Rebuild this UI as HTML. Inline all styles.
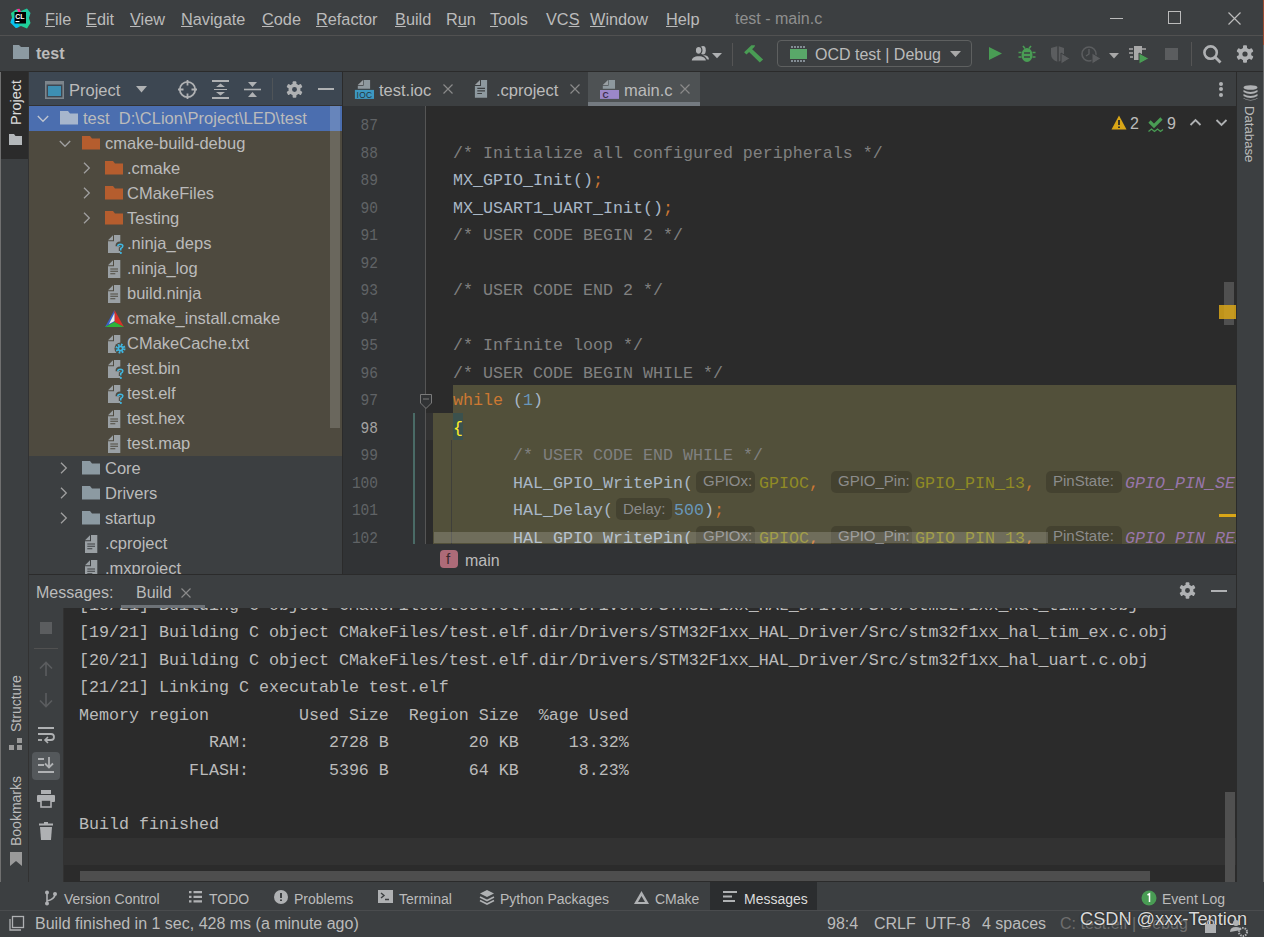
<!DOCTYPE html>
<html><head><meta charset="utf-8">
<style>
*{margin:0;padding:0;box-sizing:border-box}
html,body{width:1264px;height:937px;overflow:hidden;background:#3c3f41;font-family:"Liberation Sans",sans-serif;color:#bbbbbb}
.a{position:absolute}
.t{position:absolute;white-space:pre;font-size:16px}
.m{font-family:"Liberation Mono",monospace;white-space:pre;position:absolute;font-size:16.67px}
svg{position:absolute;overflow:visible}
#editor .m{margin-top:2px}
</style></head><body>
<!-- window left border -->
<div class="a" style="left:0;top:0;width:1px;height:937px;background:#707070"></div>

<!-- MENU BAR -->
<div id="menu" class="a" style="left:0;top:0;width:1264px;height:35px;background:#3c3f41">
<svg style="left:10px;top:8px" width="21" height="21" viewBox="0 0 21 21">
<defs><linearGradient id="lg2" x1="0" y1="0" x2="1" y2="1"><stop offset="0" stop-color="#1ed48a"/><stop offset="0.6" stop-color="#1ec9a8"/><stop offset="1" stop-color="#21d789"/></linearGradient></defs>
<path d="M1 5 L7 1 L11 3 L17 0.5 L20.5 5 L19 10 L20.5 15 L17 20.5 L11 18 L6 20 L0.5 14.5 L2 10 Z" fill="url(#lg2)"/>
<path d="M0.5 14.5 L2 10 L7 11 L9 19 L6 20 Z" fill="#07c3f2"/>
<path d="M7 1 L9.5 0.8 L11 4 L8 4 Z" fill="#fc2f98"/>
<rect x="4.5" y="4" width="11.5" height="11.5" fill="#000"/>
<text x="5.3" y="10.8" font-family="Liberation Sans" font-weight="bold" font-size="7" fill="#fff">CL</text>
<rect x="5.5" y="13" width="4" height="1.1" fill="#fff"/>
</svg>
<div class="t" style="left:45px;top:10px;line-height:18px;font-size:16.3px"><u>F</u>ile</div>
<div class="t" style="left:86px;top:10px;line-height:18px;font-size:16.3px"><u>E</u>dit</div>
<div class="t" style="left:130px;top:10px;line-height:18px;font-size:16.3px"><u>V</u>iew</div>
<div class="t" style="left:181px;top:10px;line-height:18px;font-size:16.3px"><u>N</u>avigate</div>
<div class="t" style="left:262px;top:10px;line-height:18px;font-size:16.3px"><u>C</u>ode</div>
<div class="t" style="left:316px;top:10px;line-height:18px;font-size:16.3px"><u>R</u>efactor</div>
<div class="t" style="left:395px;top:10px;line-height:18px;font-size:16.3px"><u>B</u>uild</div>
<div class="t" style="left:446px;top:10px;line-height:18px;font-size:16.3px">R<u>u</u>n</div>
<div class="t" style="left:490px;top:10px;line-height:18px;font-size:16.3px"><u>T</u>ools</div>
<div class="t" style="left:546px;top:10px;line-height:18px;font-size:16.3px">VC<u>S</u></div>
<div class="t" style="left:590px;top:10px;line-height:18px;font-size:16.3px"><u>W</u>indow</div>
<div class="t" style="left:666px;top:10px;line-height:18px;font-size:16.3px"><u>H</u>elp</div>
<div class="t" style="left:735px;top:10px;line-height:18px;color:#8f8f8f">test - main.c</div>
<div class="a" style="left:1110px;top:18px;width:13px;height:1px;background:#bbb"></div>
<div class="a" style="left:1168px;top:11px;width:13px;height:13px;border:1px solid #bbb"></div>
<svg style="left:1228px;top:12px" width="13" height="13"><path d="M0.5 0.5 L12.5 12.5 M12.5 0.5 L0.5 12.5" stroke="#bbb" stroke-width="1.2"/></svg>
</div>
<div class="a" style="left:0;top:35px;width:1264px;height:1px;background:#515151"></div>

<!-- NAV BAR -->
<div id="nav" class="a" style="left:0;top:36px;width:1264px;height:35px;background:#3c3f41">
<svg style="left:13px;top:9px" width="16" height="14"><path d="M0 0 H6 L8 2 H16 V14 H0 Z" fill="#8c9aa2"/></svg>
<div class="t" style="left:36px;top:9px;line-height:18px;font-weight:bold">test</div>
<svg style="left:686px;top:4px" width="28" height="28" viewBox="0 0 28 28"><ellipse cx="17" cy="10.2" rx="2.8" ry="4.2" fill="#afb1b3"/><path d="M15 19 Q16 15 19 15.2 Q22.5 15.6 23 19.5 Z" fill="#afb1b3"/><ellipse cx="12.6" cy="10.3" rx="3.3" ry="4" fill="#afb1b3" stroke="#3c3f41" stroke-width="1.2"/><path d="M5 21 Q5.2 15.8 12.6 15.4 Q20.4 15.8 20.6 21 Z" fill="#afb1b3" stroke="#3c3f41" stroke-width="1.2"/><rect x="4" y="21" width="18" height="3" fill="#3c3f41"/></svg>
<svg style="left:712px;top:17px" width="10" height="6"><path d="M0 0 H10 L5 5.2 Z" fill="#afb1b3"/></svg>
<div class="a" style="left:732px;top:7px;width:1px;height:23px;background:#555"></div>
<svg style="left:740px;top:4px" width="28" height="28" viewBox="0 0 28 28"><path d="M4.1 12.3 L11.4 5.3 L15.1 5.3 L14.4 7 L6.5 14.6 Z" fill="#499c54"/><path d="M8.3 11.2 L11.4 8.6 L23.1 19.6 L19.8 22.6 Z" fill="#499c54"/></svg>
<div class="a" style="left:777px;top:4px;width:195px;height:27px;border:1px solid #5e6060;border-radius:4px"></div>
<svg style="left:790px;top:10px" width="17" height="16" viewBox="0 0 17 16"><rect x="0" y="3" width="17" height="10" fill="#59a869"/><path d="M2 0 v2 M5 0 v2 M8 0 v2 M11 0 v2 M14 0 v2 M2 14 v2 M5 14 v2 M8 14 v2 M11 14 v2 M14 14 v2" stroke="#9aa7b0" stroke-width="1.5"/></svg>
<div class="t" style="left:815px;top:10px;line-height:18px">OCD test | Debug</div>
<svg style="left:950px;top:15px" width="11" height="7"><path d="M0 0 H11 L5.5 6 Z" fill="#a8a8a8"/></svg>
<svg style="left:989px;top:11px" width="14" height="14"><path d="M0 0 L13 6.5 L0 13 Z" fill="#499c54"/></svg>
<svg style="left:1018px;top:9px" width="18" height="18" viewBox="0 0 18 18"><path d="M5 1 L7 3.5 M13 1 L11 3.5" stroke="#499c54" stroke-width="1.6"/><ellipse cx="9" cy="10" rx="5.5" ry="7" fill="#499c54"/><path d="M0 8 H3 M15 8 H18 M0 12 H3 M15 12 H18 M5 8 H13 M5 12 H13" stroke="#3c3f41" stroke-width="0"/><path d="M0.5 7.5 H3.5 M14.5 7.5 H17.5 M0.5 12 H3.5 M14.5 12 H17.5" stroke="#499c54" stroke-width="1.6"/><path d="M6 8 H12 M6 12 H12" stroke="#3c3f41" stroke-width="1.4"/></svg>
<svg style="left:1050px;top:9px" width="22" height="20" viewBox="0 0 22 20"><path d="M1 3 L8 1 L14 3 V9 Q14 15 8 17 Q1 15 1 9 Z" fill="#5b5d5f"/><path d="M8 1 V17" stroke="#3c3f41" stroke-width="1.5"/><path d="M11 8 L20 13.5 L11 19 Z" fill="#5b5d5f" stroke="#3c3f41" stroke-width="1"/></svg>
<svg style="left:1081px;top:9px" width="22" height="20" viewBox="0 0 22 20"><circle cx="8" cy="9" r="7" fill="none" stroke="#5b5d5f" stroke-width="1.6"/><path d="M8 4 V9 L5 11" stroke="#5b5d5f" stroke-width="1.4" fill="none"/><path d="M11 8 L20 13.5 L11 19 Z" fill="#5b5d5f" stroke="#3c3f41" stroke-width="1"/></svg>
<svg style="left:1109px;top:17px" width="10" height="6"><path d="M0 0 H10 L5 5.5 Z" fill="#a8a8a8"/></svg>
<svg style="left:1129px;top:9px" width="22" height="20" viewBox="0 0 22 20"><rect x="5" y="1" width="8" height="14" fill="#a8a8a8"/><path d="M0 4 H4 M0 8 H4 M1 12 H4 M13 4 H17" stroke="#a8a8a8" stroke-width="1.6"/><path d="M10 8 L20 13.5 L10 19 Z" fill="#499c54" stroke="#3c3f41" stroke-width="1"/></svg>
<div class="a" style="left:1165px;top:12px;width:13px;height:12px;background:#5b5d5f"></div>
<div class="a" style="left:1191px;top:6px;width:1px;height:24px;background:#555"></div>
<svg style="left:1203px;top:9px" width="19" height="19" viewBox="0 0 19 19"><circle cx="7.6" cy="7.6" r="6.2" fill="none" stroke="#afb1b3" stroke-width="2.6"/><path d="M12 12 L17.5 17.5" stroke="#afb1b3" stroke-width="2.8"/></svg>
<svg style="left:1236px;top:9px" width="18" height="18" viewBox="0 0 18 18"><g fill="#afb1b3"><circle cx="9" cy="9" r="6.3"/><rect x="7" y="0.3" width="4" height="4.5" rx="1" transform="rotate(0 9 9)"/><rect x="7" y="0.3" width="4" height="4.5" rx="1" transform="rotate(60 9 9)"/><rect x="7" y="0.3" width="4" height="4.5" rx="1" transform="rotate(120 9 9)"/><rect x="7" y="0.3" width="4" height="4.5" rx="1" transform="rotate(180 9 9)"/><rect x="7" y="0.3" width="4" height="4.5" rx="1" transform="rotate(240 9 9)"/><rect x="7" y="0.3" width="4" height="4.5" rx="1" transform="rotate(300 9 9)"/></g><circle cx="9" cy="9" r="2.6" fill="#3c3f41"/></svg>
</div>
<div class="a" style="left:0;top:71px;width:1264px;height:1px;background:#2b2b2b"></div>

<!-- LEFT STRIP -->
<div id="lstrip" class="a" style="left:1px;top:72px;width:27px;height:810px;background:#3c3f41">
<div class="a" style="left:0;top:0;width:27px;height:87px;background:#2b2b2b"></div>
<div class="t" style="left:6px;top:53px;width:60px;height:18px;line-height:18px;font-size:14.5px;color:#dcdcdc;transform:rotate(-90deg);transform-origin:0 0">Project</div>
<svg style="left:8px;top:62px" width="13" height="11"><path d="M0 0 H5 L6.5 2 H13 V11 H0 Z" fill="#b4b8bb"/></svg>
<div class="t" style="left:7px;top:660px;width:70px;height:16px;line-height:16px;font-size:14px;color:#bbbbbb;transform:rotate(-90deg);transform-origin:0 0">Structure</div>
<svg style="left:8px;top:666px" width="13" height="12"><rect x="8" y="0" width="5" height="5" fill="#9a9a9a"/><rect x="0" y="7" width="5" height="5" fill="#9a9a9a"/><rect x="8" y="7" width="5" height="5" fill="#9a9a9a"/></svg>
<div class="t" style="left:7px;top:774px;width:80px;height:16px;line-height:16px;font-size:14px;color:#bbbbbb;transform:rotate(-90deg);transform-origin:0 0">Bookmarks</div>
<svg style="left:9px;top:780px" width="12" height="14"><path d="M0 0 H12 V14 L6 9 L0 14 Z" fill="#9a9a9a"/></svg>
</div>
<div class="a" style="left:28px;top:72px;width:1px;height:810px;background:#323232"></div>

<!-- PROJECT PANEL -->
<div id="proj" class="a" style="left:29px;top:72px;width:313px;height:502px;background:#3c3f41;overflow:hidden">
<div class="a" style="left:0;top:0;width:313px;height:33px;background:#3d4752"></div>
<div class="a" style="left:0;top:33px;width:313px;height:1px;background:#323232"></div>
<svg style="left:16px;top:9px" width="19" height="18" viewBox="0 0 19 18"><rect x="0.8" y="0.8" width="17.4" height="16.4" fill="none" stroke="#7d858c" stroke-width="1.6"/><rect x="0" y="0" width="19" height="3.5" fill="#7d858c"/><rect x="3" y="5" width="13" height="10" fill="#3d8fb3"/></svg>
<div class="t" style="left:40px;top:9px;line-height:18px;font-size:16.5px">Project</div>
<svg style="left:107px;top:14px" width="11" height="7"><path d="M0 0 H11 L5.5 6.5 Z" fill="#afb1b3"/></svg>
<svg style="left:149px;top:8px" width="19" height="19" viewBox="0 0 19 19"><circle cx="9.5" cy="9.5" r="7.7" fill="none" stroke="#afb1b3" stroke-width="1.8"/><path d="M9.5 0 V5.5 M9.5 13.5 V19 M0 9.5 H5.5 M13.5 9.5 H19" stroke="#afb1b3" stroke-width="1.8"/></svg>
<svg style="left:183px;top:8px" width="17" height="19" viewBox="0 0 17 19"><path d="M0 1 H17 M0 18 H17" stroke="#afb1b3" stroke-width="2"/><path d="M4 7 L8.5 3.5 L13 7 Z M4 12 L8.5 15.5 L13 12 Z" fill="#afb1b3"/><path d="M2 9.5 H15" stroke="#afb1b3" stroke-width="1"/></svg>
<svg style="left:215px;top:8px" width="17" height="19" viewBox="0 0 17 19"><path d="M0 9.5 H17" stroke="#afb1b3" stroke-width="1.6"/><path d="M4 2 L8.5 7 L13 2 Z M4 17 L8.5 12 L13 17 Z" fill="#afb1b3"/></svg>
<div class="a" style="left:243px;top:6px;width:1px;height:22px;background:#4f5458"></div>
<svg style="left:257px;top:9px" width="17" height="17" viewBox="0 0 18 18"><g fill="#afb1b3"><circle cx="9" cy="9" r="6.3"/><rect x="7" y="0.3" width="4" height="4.5" rx="1" transform="rotate(0 9 9)"/><rect x="7" y="0.3" width="4" height="4.5" rx="1" transform="rotate(60 9 9)"/><rect x="7" y="0.3" width="4" height="4.5" rx="1" transform="rotate(120 9 9)"/><rect x="7" y="0.3" width="4" height="4.5" rx="1" transform="rotate(180 9 9)"/><rect x="7" y="0.3" width="4" height="4.5" rx="1" transform="rotate(240 9 9)"/><rect x="7" y="0.3" width="4" height="4.5" rx="1" transform="rotate(300 9 9)"/></g><circle cx="9" cy="9" r="2.6" fill="#3d4752"/></svg>
<div class="a" style="left:289px;top:16px;width:16px;height:2px;background:#afb1b3"></div>
<div class="a" style="left:0;top:34px;width:313px;height:25px;background:#4b6eaf"></div>
<div class="a" style="left:0;top:59px;width:313px;height:325px;background:#4e4a3f"></div>
<svg style="left:8px;top:43px" width="12" height="8" viewBox="0 0 12 8"><path d="M0.8 1 L6 6.3 L11.2 1" fill="none" stroke="#c0c6d0" stroke-width="1.3"/></svg><svg style="left:31px;top:39px" width="18" height="14" viewBox="0 0 18 14"><path d="M0 0 H8 L10 2.6 H18 V13.6 H0 Z" fill="#a7b6cc"/></svg><div class="t" style="left:54px;top:37px;line-height:18px;font-size:16.5px">test  D:\CLion\Project\LED\test</div>
<svg style="left:30px;top:68px" width="12" height="8" viewBox="0 0 12 8"><path d="M0.8 1 L6 6.3 L11.2 1" fill="none" stroke="#a0a0a0" stroke-width="1.3"/></svg><svg style="left:53px;top:64px" width="18" height="14" viewBox="0 0 18 14"><path d="M0 0 H8 L10 2.6 H18 V13.6 H0 Z" fill="#b55d2e"/></svg><div class="t" style="left:76px;top:62px;line-height:18px;font-size:16.5px">cmake-build-debug</div>
<svg style="left:54px;top:90px" width="8" height="12" viewBox="0 0 8 12"><path d="M1 0.8 L6.3 6 L1 11.2" fill="none" stroke="#a0a0a0" stroke-width="1.3"/></svg><svg style="left:76px;top:89px" width="18" height="14" viewBox="0 0 18 14"><path d="M0 0 H8 L10 2.6 H18 V13.6 H0 Z" fill="#b55d2e"/></svg><div class="t" style="left:98px;top:87px;line-height:18px;font-size:16.5px">.cmake</div>
<svg style="left:54px;top:115px" width="8" height="12" viewBox="0 0 8 12"><path d="M1 0.8 L6.3 6 L1 11.2" fill="none" stroke="#a0a0a0" stroke-width="1.3"/></svg><svg style="left:76px;top:114px" width="18" height="14" viewBox="0 0 18 14"><path d="M0 0 H8 L10 2.6 H18 V13.6 H0 Z" fill="#b55d2e"/></svg><div class="t" style="left:98px;top:112px;line-height:18px;font-size:16.5px">CMakeFiles</div>
<svg style="left:54px;top:140px" width="8" height="12" viewBox="0 0 8 12"><path d="M1 0.8 L6.3 6 L1 11.2" fill="none" stroke="#a0a0a0" stroke-width="1.3"/></svg><svg style="left:76px;top:139px" width="18" height="14" viewBox="0 0 18 14"><path d="M0 0 H8 L10 2.6 H18 V13.6 H0 Z" fill="#b55d2e"/></svg><div class="t" style="left:98px;top:137px;line-height:18px;font-size:16.5px">Testing</div>
<svg style="left:79px;top:163px" width="18" height="20" viewBox="0 0 18 20"><path d="M6 0 H12.3 V18 H0 V6.2 H6 Z" fill="#9aa0a4"/><path d="M0 5.2 L5 0.2 V5.2 Z" fill="#9aa0a4"/><path d="M9.5 11.2 Q9.5 8.6 12.3 8.6 Q15.2 8.6 15.2 11.1 Q15.2 12.8 12.8 13.8 V16" fill="none" stroke="#4e4a3f" stroke-width="4"/><path d="M9.8 11.2 Q9.8 9.2 12.3 9.2 Q14.8 9.2 14.8 11.1 Q14.8 12.6 12.7 13.5 V15.6" fill="none" stroke="#40b6e0" stroke-width="1.6"/><rect x="11.9" y="17" width="1.8" height="1.9" fill="#40b6e0"/></svg><div class="t" style="left:98px;top:162px;line-height:18px;font-size:16.5px">.ninja_deps</div>
<svg style="left:79px;top:188px" width="18" height="20" viewBox="0 0 18 20"><path d="M6 0 H12.3 V18 H0 V6.2 H6 Z" fill="#9aa0a4"/><path d="M0 5.2 L5 0.2 V5.2 Z" fill="#9aa0a4"/><path d="M2.3 9 H10 M2.3 11.3 H10 M2.3 13.7 H7.3" stroke="#4e4a3f" stroke-width="1.1"/></svg><div class="t" style="left:98px;top:187px;line-height:18px;font-size:16.5px">.ninja_log</div>
<svg style="left:79px;top:213px" width="18" height="20" viewBox="0 0 18 20"><path d="M6 0 H12.3 V18 H0 V6.2 H6 Z" fill="#9aa0a4"/><path d="M0 5.2 L5 0.2 V5.2 Z" fill="#9aa0a4"/><path d="M2.3 9 H10 M2.3 11.3 H10 M2.3 13.7 H7.3" stroke="#4e4a3f" stroke-width="1.1"/></svg><div class="t" style="left:98px;top:212px;line-height:18px;font-size:16.5px">build.ninja</div>
<svg style="left:76px;top:238px" width="19" height="18" viewBox="0 0 19 18"><path d="M9.5 0 L0 17 L9.5 12 Z" fill="#3a62c8"/><path d="M9.5 0 L19 17 L9.5 12 Z" fill="#d8302a"/><path d="M0 17 L9.5 12 L19 17 Z" fill="#2db33a"/><path d="M9.5 3 L4 14 L9.5 11 Z" fill="#e8e8e8"/></svg><div class="t" style="left:98px;top:237px;line-height:18px;font-size:16.5px">cmake_install.cmake</div>
<svg style="left:79px;top:263px" width="18" height="20" viewBox="0 0 18 20"><path d="M6 0 H12.3 V18 H0 V6.2 H6 Z" fill="#9aa0a4"/><path d="M0 5.2 L5 0.2 V5.2 Z" fill="#9aa0a4"/><circle cx="12.5" cy="13.5" r="6" fill="#4e4a3f"/><circle cx="12.5" cy="13.5" r="3.9" fill="none" stroke="#40b6e0" stroke-width="2.2" stroke-dasharray="1.7 1.35"/><circle cx="12.5" cy="13.5" r="3" fill="#40b6e0"/><circle cx="12.5" cy="13.5" r="1.2" fill="#4e4a3f"/></svg><div class="t" style="left:98px;top:262px;line-height:18px;font-size:16.5px">CMakeCache.txt</div>
<svg style="left:79px;top:288px" width="18" height="20" viewBox="0 0 18 20"><path d="M6 0 H12.3 V18 H0 V6.2 H6 Z" fill="#9aa0a4"/><path d="M0 5.2 L5 0.2 V5.2 Z" fill="#9aa0a4"/><path d="M9.5 11.2 Q9.5 8.6 12.3 8.6 Q15.2 8.6 15.2 11.1 Q15.2 12.8 12.8 13.8 V16" fill="none" stroke="#4e4a3f" stroke-width="4"/><path d="M9.8 11.2 Q9.8 9.2 12.3 9.2 Q14.8 9.2 14.8 11.1 Q14.8 12.6 12.7 13.5 V15.6" fill="none" stroke="#40b6e0" stroke-width="1.6"/><rect x="11.9" y="17" width="1.8" height="1.9" fill="#40b6e0"/></svg><div class="t" style="left:98px;top:287px;line-height:18px;font-size:16.5px">test.bin</div>
<svg style="left:79px;top:313px" width="18" height="20" viewBox="0 0 18 20"><path d="M6 0 H12.3 V18 H0 V6.2 H6 Z" fill="#9aa0a4"/><path d="M0 5.2 L5 0.2 V5.2 Z" fill="#9aa0a4"/><path d="M9.5 11.2 Q9.5 8.6 12.3 8.6 Q15.2 8.6 15.2 11.1 Q15.2 12.8 12.8 13.8 V16" fill="none" stroke="#4e4a3f" stroke-width="4"/><path d="M9.8 11.2 Q9.8 9.2 12.3 9.2 Q14.8 9.2 14.8 11.1 Q14.8 12.6 12.7 13.5 V15.6" fill="none" stroke="#40b6e0" stroke-width="1.6"/><rect x="11.9" y="17" width="1.8" height="1.9" fill="#40b6e0"/></svg><div class="t" style="left:98px;top:312px;line-height:18px;font-size:16.5px">test.elf</div>
<svg style="left:79px;top:338px" width="18" height="20" viewBox="0 0 18 20"><path d="M6 0 H12.3 V18 H0 V6.2 H6 Z" fill="#9aa0a4"/><path d="M0 5.2 L5 0.2 V5.2 Z" fill="#9aa0a4"/><path d="M2.3 9 H10 M2.3 11.3 H10 M2.3 13.7 H7.3" stroke="#4e4a3f" stroke-width="1.1"/></svg><div class="t" style="left:98px;top:337px;line-height:18px;font-size:16.5px">test.hex</div>
<svg style="left:79px;top:363px" width="18" height="20" viewBox="0 0 18 20"><path d="M6 0 H12.3 V18 H0 V6.2 H6 Z" fill="#9aa0a4"/><path d="M0 5.2 L5 0.2 V5.2 Z" fill="#9aa0a4"/><path d="M2.3 9 H10 M2.3 11.3 H10 M2.3 13.7 H7.3" stroke="#4e4a3f" stroke-width="1.1"/></svg><div class="t" style="left:98px;top:362px;line-height:18px;font-size:16.5px">test.map</div>
<svg style="left:31px;top:390px" width="8" height="12" viewBox="0 0 8 12"><path d="M1 0.8 L6.3 6 L1 11.2" fill="none" stroke="#a0a0a0" stroke-width="1.3"/></svg><svg style="left:53px;top:389px" width="18" height="14" viewBox="0 0 18 14"><path d="M0 0 H8 L10 2.6 H18 V13.6 H0 Z" fill="#8c9aa2"/></svg><div class="t" style="left:76px;top:387px;line-height:18px;font-size:16.5px">Core</div>
<svg style="left:31px;top:415px" width="8" height="12" viewBox="0 0 8 12"><path d="M1 0.8 L6.3 6 L1 11.2" fill="none" stroke="#a0a0a0" stroke-width="1.3"/></svg><svg style="left:53px;top:414px" width="18" height="14" viewBox="0 0 18 14"><path d="M0 0 H8 L10 2.6 H18 V13.6 H0 Z" fill="#8c9aa2"/></svg><div class="t" style="left:76px;top:412px;line-height:18px;font-size:16.5px">Drivers</div>
<svg style="left:31px;top:440px" width="8" height="12" viewBox="0 0 8 12"><path d="M1 0.8 L6.3 6 L1 11.2" fill="none" stroke="#a0a0a0" stroke-width="1.3"/></svg><svg style="left:53px;top:439px" width="18" height="14" viewBox="0 0 18 14"><path d="M0 0 H8 L10 2.6 H18 V13.6 H0 Z" fill="#8c9aa2"/></svg><div class="t" style="left:76px;top:437px;line-height:18px;font-size:16.5px">startup</div>
<svg style="left:56px;top:463px" width="18" height="20" viewBox="0 0 18 20"><path d="M6 0 H12.3 V18 H0 V6.2 H6 Z" fill="#9aa0a4"/><path d="M0 5.2 L5 0.2 V5.2 Z" fill="#9aa0a4"/><path d="M2.3 9 H10 M2.3 11.3 H10 M2.3 13.7 H7.3" stroke="#3c3f41" stroke-width="1.1"/></svg><div class="t" style="left:76px;top:462px;line-height:18px;font-size:16.5px">.cproject</div>
<svg style="left:56px;top:488px" width="18" height="20" viewBox="0 0 18 20"><path d="M6 0 H12.3 V18 H0 V6.2 H6 Z" fill="#9aa0a4"/><path d="M0 5.2 L5 0.2 V5.2 Z" fill="#9aa0a4"/><path d="M2.3 9 H10 M2.3 11.3 H10 M2.3 13.7 H7.3" stroke="#3c3f41" stroke-width="1.1"/></svg><div class="t" style="left:76px;top:487px;line-height:18px;font-size:16.5px">.mxproject</div>
<div class="a" style="left:301px;top:34px;width:10px;height:322px;background:rgba(255,255,255,0.16)"></div>
</div>
<div class="a" style="left:342px;top:72px;width:1px;height:502px;background:#2b2b2b"></div>

<!-- EDITOR -->
<div id="tabs" class="a" style="left:343px;top:72px;width:893px;height:34px;background:#3c3f41">
<svg style="left:11px;top:7px" width="21" height="21" viewBox="0 0 21 21"><path d="M3.8 6 L9 1 V6 Z" fill="#9aa0a4"/><path d="M9.6 1 H16.1 V9.8 H3.8 V6.8 H9.6 Z" fill="#8e999f"/><rect x="0.9" y="10.9" width="19.1" height="9" fill="#3d98c1"/><text x="2.6" y="18.7" font-family="Liberation Sans" font-size="8.4" fill="#24343c" letter-spacing="0.3">IOC</text></svg>
<div class="t" style="left:36px;top:9px;line-height:18px;font-size:16.5px">test.ioc</div>
<svg style="left:100px;top:12px" width="10" height="10"><path d="M0.5 0.5 L9.5 9.5 M9.5 0.5 L0.5 9.5" stroke="#8a8a8a" stroke-width="1.2"/></svg>
<svg style="left:131px;top:7px" width="14" height="20" viewBox="0 0 14 20"><path d="M0.9 6 L6 1 V6 Z" fill="#9aa0a4"/><path d="M7 1 H13.1 V18.8 H0.9 V7 H7 Z" fill="#8e999f"/><path d="M3.3 9.4 H11 M3.3 11.9 H11 M3.3 14.5 H8" stroke="#3c3f41" stroke-width="1.1"/></svg>
<div class="t" style="left:153px;top:9px;line-height:18px;font-size:16.5px">.cproject</div>
<svg style="left:227px;top:12px" width="10" height="10"><path d="M0.5 0.5 L9.5 9.5 M9.5 0.5 L0.5 9.5" stroke="#8a8a8a" stroke-width="1.2"/></svg>
<div class="a" style="left:245px;top:0;width:112px;height:34px;background:#4e5254"></div>
<div class="a" style="left:245px;top:30px;width:112px;height:4px;background:#747a80"></div>
<svg style="left:256px;top:7px" width="21" height="21" viewBox="0 0 21 21"><path d="M3.8 6 L9 1 V6 Z" fill="#9aa0a4"/><path d="M9.6 1 H16 V9.8 H3.8 V6.8 H9.6 Z" fill="#8e999f"/><rect x="1" y="11" width="19" height="8.9" fill="#9b87c9"/><text x="3.4" y="18.6" font-family="Liberation Sans" font-size="8.6" font-weight="bold" fill="#3a2d4a">C</text></svg>
<div class="t" style="left:281px;top:9px;line-height:18px;font-size:16.5px">main.c</div>
<svg style="left:337px;top:12px" width="10" height="10"><path d="M0.5 0.5 L9.5 9.5 M9.5 0.5 L0.5 9.5" stroke="#8a8a8a" stroke-width="1.2"/></svg>
<div class="a" style="left:876px;top:9.5px;width:4px;height:4px;border-radius:2px;background:#afb1b3"></div>
<div class="a" style="left:876px;top:15px;width:4px;height:4px;border-radius:2px;background:#afb1b3"></div>
<div class="a" style="left:876px;top:20.5px;width:4px;height:4px;border-radius:2px;background:#afb1b3"></div>
</div>
<div id="editor" class="a" style="left:343px;top:106px;width:893px;height:438px;background:#2b2b2b;overflow:hidden">
<div class="a" style="left:0;top:0;width:83px;height:438px;background:#313335"></div>
<div class="a" style="left:82px;top:0;width:1px;height:438px;background:#555555"></div>
<div class="a" style="left:110px;top:279.0px;width:800px;height:27.5px;background:#52503a"></div>
<div class="a" style="left:90px;top:306.5px;width:810px;height:137.5px;background:#52503a"></div>
<div class="a" style="left:83px;top:306.5px;width:7px;height:27.5px;background:#323232"></div>
<div class="a" style="left:83px;top:334.0px;width:7px;height:110.0px;background:#2b2b2b"></div>
<div class="a" style="left:110px;top:306.5px;width:10px;height:27.5px;background:#3b514d"></div>
<div class="a" style="left:70px;top:306.5px;width:2px;height:137.5px;background:#4a6b66"></div>
<div class="a" style="left:108px;top:334.0px;width:1px;height:110.0px;background:#3f3f3a"></div>
<svg style="left:77px;top:288.0px" width="12" height="16" viewBox="0 0 12 16"><path d="M0.5 0.5 H11.5 V9 L6 14.5 L0.5 9 Z" fill="#313335" stroke="#7a7a7a" stroke-width="1"/><path d="M3 5 H9" stroke="#7a7a7a" stroke-width="1"/></svg>
<div class="m" style="left:0;width:35px;text-align:right;transform:scaleX(0.87);transform-origin:100% 0;top:4.0px;line-height:27.5px;color:#606366">87</div>
<div class="m" style="left:0;width:35px;text-align:right;transform:scaleX(0.87);transform-origin:100% 0;top:31.5px;line-height:27.5px;color:#606366">88</div>
<div class="m" style="left:0;width:35px;text-align:right;transform:scaleX(0.87);transform-origin:100% 0;top:59.0px;line-height:27.5px;color:#606366">89</div>
<div class="m" style="left:0;width:35px;text-align:right;transform:scaleX(0.87);transform-origin:100% 0;top:86.5px;line-height:27.5px;color:#606366">90</div>
<div class="m" style="left:0;width:35px;text-align:right;transform:scaleX(0.87);transform-origin:100% 0;top:114.0px;line-height:27.5px;color:#606366">91</div>
<div class="m" style="left:0;width:35px;text-align:right;transform:scaleX(0.87);transform-origin:100% 0;top:141.5px;line-height:27.5px;color:#606366">92</div>
<div class="m" style="left:0;width:35px;text-align:right;transform:scaleX(0.87);transform-origin:100% 0;top:169.0px;line-height:27.5px;color:#606366">93</div>
<div class="m" style="left:0;width:35px;text-align:right;transform:scaleX(0.87);transform-origin:100% 0;top:196.5px;line-height:27.5px;color:#606366">94</div>
<div class="m" style="left:0;width:35px;text-align:right;transform:scaleX(0.87);transform-origin:100% 0;top:224.0px;line-height:27.5px;color:#606366">95</div>
<div class="m" style="left:0;width:35px;text-align:right;transform:scaleX(0.87);transform-origin:100% 0;top:251.5px;line-height:27.5px;color:#606366">96</div>
<div class="m" style="left:0;width:35px;text-align:right;transform:scaleX(0.87);transform-origin:100% 0;top:279.0px;line-height:27.5px;color:#606366">97</div>
<div class="m" style="left:0;width:35px;text-align:right;transform:scaleX(0.87);transform-origin:100% 0;top:306.5px;line-height:27.5px;color:#a4a3a3">98</div>
<div class="m" style="left:0;width:35px;text-align:right;transform:scaleX(0.87);transform-origin:100% 0;top:334.0px;line-height:27.5px;color:#606366">99</div>
<div class="m" style="left:0;width:35px;text-align:right;transform:scaleX(0.87);transform-origin:100% 0;top:361.5px;line-height:27.5px;color:#606366">100</div>
<div class="m" style="left:0;width:35px;text-align:right;transform:scaleX(0.87);transform-origin:100% 0;top:389.0px;line-height:27.5px;color:#606366">101</div>
<div class="m" style="left:0;width:35px;text-align:right;transform:scaleX(0.87);transform-origin:100% 0;top:416.5px;line-height:27.5px;color:#606366">102</div>
<div class="m" style="left:110px;top:31.5px;line-height:27.5px;color:#a9b7c6"><span style="color:#808080">/* Initialize all configured peripherals */</span></div>
<div class="m" style="left:110px;top:59.0px;line-height:27.5px;color:#a9b7c6"><span style="color:#a9b7c6">MX_GPIO_Init()</span><span style="color:#cc7832">;</span></div>
<div class="m" style="left:110px;top:86.5px;line-height:27.5px;color:#a9b7c6"><span style="color:#a9b7c6">MX_USART1_UART_Init()</span><span style="color:#cc7832">;</span></div>
<div class="m" style="left:110px;top:114.0px;line-height:27.5px;color:#a9b7c6"><span style="color:#808080">/* USER CODE BEGIN 2 */</span></div>
<div class="m" style="left:110px;top:169.0px;line-height:27.5px;color:#a9b7c6"><span style="color:#808080">/* USER CODE END 2 */</span></div>
<div class="m" style="left:110px;top:224.0px;line-height:27.5px;color:#a9b7c6"><span style="color:#808080">/* Infinite loop */</span></div>
<div class="m" style="left:110px;top:251.5px;line-height:27.5px;color:#a9b7c6"><span style="color:#808080">/* USER CODE BEGIN WHILE */</span></div>
<div class="m" style="left:110px;top:279.0px;line-height:27.5px;color:#a9b7c6"><span style="color:#cc7832">while</span><span style="color:#a9b7c6"> (</span><span style="color:#6897bb">1</span><span style="color:#a9b7c6">)</span></div>
<div class="m" style="left:110px;top:306.5px;line-height:27.5px;color:#a9b7c6"><span style="color:#ffef28">{</span></div>
<div class="m" style="left:170px;top:334.0px;line-height:27.5px;color:#808080">/* USER CODE END WHILE */</div>
<div class="m" style="left:170px;top:361.5px;line-height:27.5px;color:#a9b7c6">HAL_GPIO_WritePin(</div>
<div class="a" style="left:353px;top:364.5px;width:59px;height:22px;border-radius:5px;background:rgba(0,0,0,0.17)"></div><div class="t" style="left:360px;top:366.0px;line-height:18px;font-size:15px;color:#8c8c8c">GPIOx:</div>
<div class="m" style="left:416px;top:361.5px;line-height:27.5px"><span style="color:#908b25">GPIOC</span><span style="color:#cc7832">,</span></div>
<div class="a" style="left:488px;top:364.5px;width:81px;height:22px;border-radius:5px;background:rgba(0,0,0,0.17)"></div><div class="t" style="left:495px;top:366.0px;line-height:18px;font-size:15px;color:#8c8c8c">GPIO_Pin:</div>
<div class="m" style="left:572px;top:361.5px;line-height:27.5px"><span style="color:#908b25">GPIO_PIN_13</span><span style="color:#cc7832">,</span></div>
<div class="a" style="left:703px;top:364.5px;width:76px;height:22px;border-radius:5px;background:rgba(0,0,0,0.17)"></div><div class="t" style="left:710px;top:366.0px;line-height:18px;font-size:15px;color:#8c8c8c">PinState:</div>
<div class="m" style="left:782px;top:361.5px;line-height:27.5px;font-style:italic;color:#9876aa">GPIO_PIN_SET);</div>
<div class="m" style="left:170px;top:416.5px;line-height:27.5px;color:#a9b7c6">HAL_GPIO_WritePin(</div>
<div class="a" style="left:353px;top:419.5px;width:59px;height:22px;border-radius:5px;background:rgba(0,0,0,0.17)"></div><div class="t" style="left:360px;top:421.0px;line-height:18px;font-size:15px;color:#8c8c8c">GPIOx:</div>
<div class="m" style="left:416px;top:416.5px;line-height:27.5px"><span style="color:#908b25">GPIOC</span><span style="color:#cc7832">,</span></div>
<div class="a" style="left:488px;top:419.5px;width:81px;height:22px;border-radius:5px;background:rgba(0,0,0,0.17)"></div><div class="t" style="left:495px;top:421.0px;line-height:18px;font-size:15px;color:#8c8c8c">GPIO_Pin:</div>
<div class="m" style="left:572px;top:416.5px;line-height:27.5px"><span style="color:#908b25">GPIO_PIN_13</span><span style="color:#cc7832">,</span></div>
<div class="a" style="left:703px;top:419.5px;width:76px;height:22px;border-radius:5px;background:rgba(0,0,0,0.17)"></div><div class="t" style="left:710px;top:421.0px;line-height:18px;font-size:15px;color:#8c8c8c">PinState:</div>
<div class="m" style="left:782px;top:416.5px;line-height:27.5px;font-style:italic;color:#9876aa">GPIO_PIN_RESET);</div>
<div class="m" style="left:170px;top:389.0px;line-height:27.5px;color:#a9b7c6">HAL_Delay(</div>
<div class="a" style="left:273px;top:392.0px;width:56px;height:22px;border-radius:5px;background:rgba(0,0,0,0.17)"></div><div class="t" style="left:280px;top:393.5px;line-height:18px;font-size:15px;color:#8c8c8c">Delay:</div>
<div class="m" style="left:331px;top:389.0px;line-height:27.5px"><span style="color:#6897bb">500</span><span style="color:#a9b7c6">)</span><span style="color:#cc7832">;</span></div>
<div class="a" style="left:91px;top:426px;width:614px;height:11px;background:rgba(255,255,255,0.17)"></div>
<div class="a" style="left:881px;top:176px;width:10px;height:43px;background:#505050"></div>
<div class="a" style="left:876px;top:199px;width:17px;height:14px;background:rgba(217,166,23,0.85)"></div>
<div class="a" style="left:876px;top:408px;width:17px;height:3px;background:#d9a617"></div>
<svg style="left:768px;top:9px" width="16" height="15" viewBox="0 0 16 15"><path d="M8 0.5 L15.5 14.5 H0.5 Z" fill="#d9a617"/><path d="M8 5 V10 M8 11.5 V13" stroke="#2b2b2b" stroke-width="1.8"/></svg>
<div class="t" style="left:787px;top:9px;line-height:18px;color:#bbbbbb">2</div>
<svg style="left:805px;top:10px" width="18" height="18" viewBox="0 0 18 18"><path d="M1.5 5.5 L6 10 L13.5 2.5" fill="none" stroke="#499c54" stroke-width="3.2"/><path d="M0.5 15.5 L3.5 13 L6.5 15.5 L9.5 13 L12.5 15.5 L15 13.5" fill="none" stroke="#499c54" stroke-width="1.3"/></svg>
<div class="t" style="left:824px;top:9px;line-height:18px;color:#bbbbbb">9</div>
<svg style="left:847px;top:13px" width="11" height="7"><path d="M0.5 6 L5.5 1 L10.5 6" fill="none" stroke="#afb1b3" stroke-width="1.8"/></svg>
<svg style="left:873px;top:13px" width="11" height="7"><path d="M0.5 1 L5.5 6 L10.5 1" fill="none" stroke="#afb1b3" stroke-width="1.8"/></svg>
</div>
<div id="crumb" class="a" style="left:343px;top:544px;width:893px;height:30px;background:#313335">
<div class="a" style="left:97px;top:6px;width:18px;height:18px;border-radius:4px;background:#ad6b78"></div>
<div class="t" style="left:103px;top:6px;line-height:18px;font-size:15px;color:#3a2a2e">f</div>
<div class="t" style="left:122px;top:8px;line-height:18px">main</div>
</div>

<!-- RIGHT STRIP -->
<div class="a" style="left:1236px;top:72px;width:1px;height:810px;background:#2b2b2b"></div>
<div id="rstrip" class="a" style="left:1237px;top:72px;width:26px;height:810px;background:#3c3f41">
<svg style="left:6px;top:13px" width="15" height="16" viewBox="0 0 15 16"><ellipse cx="7.5" cy="2.5" rx="7" ry="2.3" fill="#afb1b3"/><path d="M0.5 5 Q7.5 9 14.5 5 V7 Q7.5 11 0.5 7 Z M0.5 9 Q7.5 13 14.5 9 V11 Q7.5 15 0.5 11 Z M0.5 13 Q7.5 17 14.5 13 V13.5 Q7.5 17.5 0.5 13.5 Z" fill="#afb1b3"/></svg>
<div class="t" style="left:20px;top:34px;width:60px;height:16px;line-height:16px;font-size:13.2px;color:#bbbbbb;transform:rotate(90deg);transform-origin:0 0">Database</div>
</div>
<div class="a" style="left:1263px;top:0;width:1px;height:45px;background:#9a4a30"></div><div class="a" style="left:1263px;top:45px;width:1px;height:892px;background:#6b6b6b"></div>

<!-- MESSAGES -->
<div class="a" style="left:29px;top:574px;width:1207px;height:1px;background:#2b2b2b"></div>
<div id="msghdr" class="a" style="left:29px;top:575px;width:1207px;height:33px;background:#3c3f41">
<div class="t" style="left:7px;top:9px;line-height:18px">Messages:</div>
<div class="t" style="left:107px;top:9px;line-height:18px">Build</div>
<svg style="left:152px;top:13px" width="10" height="10"><path d="M0.5 0.5 L9.5 9.5 M9.5 0.5 L0.5 9.5" stroke="#8a8a8a" stroke-width="1.2"/></svg>
<div class="a" style="left:92px;top:30px;width:84px;height:3px;background:#6d7277"></div>
<svg style="left:1150px;top:7px" width="17" height="17" viewBox="0 0 18 18"><g fill="#afb1b3"><circle cx="9" cy="9" r="6.3"/><rect x="7" y="0.3" width="4" height="4.5" rx="1" transform="rotate(0 9 9)"/><rect x="7" y="0.3" width="4" height="4.5" rx="1" transform="rotate(60 9 9)"/><rect x="7" y="0.3" width="4" height="4.5" rx="1" transform="rotate(120 9 9)"/><rect x="7" y="0.3" width="4" height="4.5" rx="1" transform="rotate(180 9 9)"/><rect x="7" y="0.3" width="4" height="4.5" rx="1" transform="rotate(240 9 9)"/><rect x="7" y="0.3" width="4" height="4.5" rx="1" transform="rotate(300 9 9)"/></g><circle cx="9" cy="9" r="2.6" fill="#3c3f41"/></svg>
<div class="a" style="left:1182px;top:15px;width:16px;height:2px;background:#afb1b3"></div>
</div>
<div id="msgtool" class="a" style="left:29px;top:608px;width:35px;height:274px;background:#3c3f41">
<div class="a" style="left:11px;top:14px;width:12px;height:12px;background:#5b5d5f"></div>
<div class="a" style="left:5px;top:40px;width:24px;height:1px;background:#515151"></div>
<svg style="left:10px;top:53px" width="14" height="15" viewBox="0 0 14 15"><path d="M7 15 V1.5 M1 7.5 L7 1.5 L13 7.5" fill="none" stroke="#5b5d5f" stroke-width="1.6"/></svg>
<svg style="left:10px;top:85px" width="14" height="15" viewBox="0 0 14 15"><path d="M7 0 V13.5 M1 7.5 L7 13.5 L13 7.5" fill="none" stroke="#5b5d5f" stroke-width="1.6"/></svg>
<svg style="left:8px;top:118px" width="18" height="18" viewBox="0 0 18 18"><path d="M1 2 H17 M1 8 H14 Q17 8 17 11 Q17 14 14 14 H9" fill="none" stroke="#afb1b3" stroke-width="1.8"/><path d="M11 11 L8 14 L11 17" fill="none" stroke="#afb1b3" stroke-width="1.6"/><path d="M1 14 H5" stroke="#afb1b3" stroke-width="1.8"/></svg>
<div class="a" style="left:3px;top:144px;width:28px;height:28px;border-radius:4px;background:#54585b"></div>
<svg style="left:8px;top:149px" width="18" height="18" viewBox="0 0 18 18"><path d="M1 2 H7 M1 8 H7 M1 15 H17" fill="none" stroke="#afb1b3" stroke-width="1.8"/><path d="M12 0 V10 M8 6.5 L12 10.5 L16 6.5" fill="none" stroke="#afb1b3" stroke-width="1.8"/></svg>
<svg style="left:8px;top:182px" width="18" height="18" viewBox="0 0 18 18"><rect x="4" y="0" width="10" height="4" fill="#afb1b3"/><rect x="0" y="5" width="18" height="7" rx="1" fill="#afb1b3"/><rect x="4" y="10" width="10" height="7" fill="#3c3f41" stroke="#afb1b3" stroke-width="1.6"/></svg>
<svg style="left:10px;top:214px" width="14" height="18" viewBox="0 0 14 18"><rect x="0" y="1.5" width="14" height="2" fill="#afb1b3"/><rect x="5" y="0" width="4" height="2" fill="#afb1b3"/><path d="M1 5 H13 L12 18 H2 Z" fill="#afb1b3"/></svg>
<div class="a" style="left:34px;top:0;width:1px;height:274px;background:#323232"></div>
</div>
<div id="msg" class="a" style="left:64px;top:608px;width:1172px;height:274px;background:#2b2b2b;overflow:hidden">
<div class="a" style="left:0;top:230px;width:1172px;height:27px;background:#323232"></div>
<div class="m" style="left:15px;top:-16.0px;line-height:27px;color:#bbbbbb">[18/21] Building C object CMakeFiles/test.elf.dir/Drivers/STM32F1xx_HAL_Driver/Src/stm32f1xx_hal_tim.c.obj</div>
<div class="m" style="left:15px;top:11.4px;line-height:27px;color:#bbbbbb">[19/21] Building C object CMakeFiles/test.elf.dir/Drivers/STM32F1xx_HAL_Driver/Src/stm32f1xx_hal_tim_ex.c.obj</div>
<div class="m" style="left:15px;top:38.9px;line-height:27px;color:#bbbbbb">[20/21] Building C object CMakeFiles/test.elf.dir/Drivers/STM32F1xx_HAL_Driver/Src/stm32f1xx_hal_uart.c.obj</div>
<div class="m" style="left:15px;top:66.3px;line-height:27px;color:#bbbbbb">[21/21] Linking C executable test.elf</div>
<div class="m" style="left:15px;top:93.7px;line-height:27px;color:#bbbbbb">Memory region         Used Size  Region Size  %age Used</div>
<div class="m" style="left:15px;top:121.2px;line-height:27px;color:#bbbbbb">             RAM:        2728 B        20 KB     13.32%</div>
<div class="m" style="left:15px;top:148.6px;line-height:27px;color:#bbbbbb">           FLASH:        5396 B        64 KB      8.23%</div>
<div class="m" style="left:15px;top:203.4px;line-height:27px;color:#bbbbbb">Build finished</div>
<div class="a" style="left:16px;top:263px;width:1070px;height:10px;background:rgba(255,255,255,0.17)"></div>
<div class="a" style="left:1161px;top:184px;width:10px;height:90px;background:#505050"></div>
</div>

<!-- BOTTOM TOOLBAR / STATUS -->
<div id="btool" class="a" style="left:0;top:882px;width:1264px;height:28px;background:#3c3f41">
<svg style="left:44px;top:8px" width="14" height="16" viewBox="0 0 14 16"><circle cx="3" cy="2.5" r="2" fill="#afb1b3"/><circle cx="3" cy="13.5" r="2" fill="#afb1b3"/><circle cx="11" cy="4" r="2" fill="#afb1b3"/><path d="M3 2.5 V13.5 M11 4 Q11 9 3 11" fill="none" stroke="#afb1b3" stroke-width="1.6"/></svg>
<div class="t" style="left:64px;top:8px;line-height:18px;font-size:14px">Version Control</div>
<svg style="left:189px;top:9px" width="14" height="12" viewBox="0 0 14 12"><path d="M0 1.2 H2.5 M4.5 1.2 H13 M0 5.8 H2.5 M4.5 5.8 H13 M0 10.4 H2.5 M4.5 10.4 H13" stroke="#afb1b3" stroke-width="2.2"/></svg>
<div class="t" style="left:209px;top:8px;line-height:18px;font-size:14px">TODO</div>
<svg style="left:274px;top:8px" width="14" height="14"><circle cx="7" cy="7" r="7" fill="#afb1b3"/><path d="M7 3 V8 M7 9.5 V11" stroke="#3c3f41" stroke-width="2"/></svg>
<div class="t" style="left:294px;top:8px;line-height:18px;font-size:14px">Problems</div>
<svg style="left:378px;top:8px" width="15" height="13" viewBox="0 0 15 13"><rect x="0" y="0" width="15" height="13" fill="#afb1b3"/><path d="M3 3 L6 5.5 L3 8 M7 9.5 H11" fill="none" stroke="#3c3f41" stroke-width="1.4"/></svg>
<div class="t" style="left:399px;top:8px;line-height:18px;font-size:14px">Terminal</div>
<svg style="left:479px;top:7px" width="16" height="16" viewBox="0 0 16 16"><path d="M8 1 L15 4.5 L8 8 L1 4.5 Z" fill="#afb1b3"/><path d="M1 8 L8 11.5 L15 8 M1 11.5 L8 15 L15 11.5" fill="none" stroke="#afb1b3" stroke-width="1.6"/></svg>
<div class="t" style="left:500px;top:8px;line-height:18px;font-size:14px">Python Packages</div>
<svg style="left:634px;top:9px" width="15" height="13" viewBox="0 0 15 13"><path d="M7.5 0 L15 13 H0 Z" fill="#afb1b3"/><path d="M7.5 5 L11 11 H4 Z" fill="#3c3f41"/></svg>
<div class="t" style="left:655px;top:8px;line-height:18px;font-size:14px">CMake</div>
<div class="a" style="left:710px;top:0;width:107px;height:28px;background:#2b2d2f"></div>
<svg style="left:723px;top:9px" width="14" height="11" viewBox="0 0 14 11"><path d="M0 1 H14 M0 5.5 H9 M0 10 H12" stroke="#afb1b3" stroke-width="2"/></svg>
<div class="t" style="left:744px;top:8px;line-height:18px;font-size:14px;color:#dcdcdc">Messages</div>
<svg style="left:1141px;top:8px" width="16" height="16"><circle cx="8" cy="8" r="7.5" fill="#499c54"/><path d="M6.5 5 L8.5 3.8 V12" fill="none" stroke="#fff" stroke-width="1.5"/></svg>
<div class="t" style="left:1162px;top:8px;line-height:18px;font-size:14px">Event Log</div>
</div>
<div class="a" style="left:0;top:910px;width:1264px;height:1px;background:#4a4c4e"></div>
<div id="status" class="a" style="left:0;top:911px;width:1264px;height:26px;background:#3c3f41">
<svg style="left:8px;top:5px" width="16" height="16" viewBox="0 0 16 16"><rect x="4.5" y="0.5" width="11" height="11" fill="none" stroke="#afb1b3" stroke-width="1.3"/><path d="M2 3 V14 H13" fill="none" stroke="#afb1b3" stroke-width="1.3"/></svg>
<div class="t" style="left:35px;top:4px;line-height:18px">Build finished in 1 sec, 428 ms (a minute ago)</div>
<div class="t" style="left:827px;top:4px;line-height:18px">98:4</div>
<div class="t" style="left:874px;top:4px;line-height:18px">CRLF</div>
<div class="t" style="left:925px;top:4px;line-height:18px">UTF-8</div>
<div class="t" style="left:982px;top:4px;line-height:18px">4 spaces</div>
<div class="t" style="left:1060px;top:4px;line-height:18px;color:#6e6e6e">C: test.elf | Debug</div>
<div class="t" style="left:1080px;top:-3px;line-height:22px;font-size:18.2px;color:#dadada;text-shadow:0 0 1.5px #222,0 0 1px #222">CSDN @xxx-Tention</div>
<svg style="left:1205px;top:8px" width="50" height="18"><rect x="0" y="5" width="11" height="9" fill="#afb1b3"/><path d="M2.5 5 V2.5 Q5.5 -0.5 8.5 2.5 V5" fill="none" stroke="#afb1b3" stroke-width="1.5"/><circle cx="31" cy="4" r="3" fill="#afb1b3"/><path d="M25 13 Q25 8 31 8 Q36 8 36 11" fill="#afb1b3"/><circle cx="38" cy="13" r="4" fill="none" stroke="#afb1b3" stroke-width="2" stroke-dasharray="1.5 1"/></svg>
</div>

</body></html>
